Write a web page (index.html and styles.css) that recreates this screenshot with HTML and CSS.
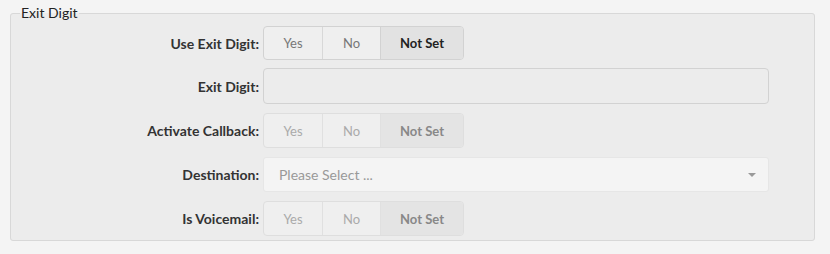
FILE: index.html
```html
<!DOCTYPE html>
<html>
<head>
<meta charset="utf-8">
<link rel="stylesheet" href="styles.css">
</head>
<body>
<fieldset class="box">
  <legend class="box-title">Exit Digit</legend>
  <div class="form">
    <div class="row">
      <label class="lbl">Use Exit Digit:</label>
      <div class="btn-group">
        <span class="btn btn-yes">Yes</span>
        <span class="btn btn-no">No</span>
        <span class="btn btn-notset active">Not Set</span>
      </div>
    </div>
    <div class="row row-input">
      <label class="lbl">Exit Digit:</label>
      <div class="input"></div>
    </div>
    <div class="row">
      <label class="lbl">Activate Callback:</label>
      <div class="btn-group disabled">
        <span class="btn btn-yes">Yes</span>
        <span class="btn btn-no">No</span>
        <span class="btn btn-notset active">Not Set</span>
      </div>
    </div>
    <div class="row">
      <label class="lbl">Destination:</label>
      <div class="select">
        <span class="placeholder">Please Select ...</span>
        <span class="caret"></span>
      </div>
    </div>
    <div class="row">
      <label class="lbl">Is Voicemail:</label>
      <div class="btn-group disabled">
        <span class="btn btn-yes">Yes</span>
        <span class="btn btn-no">No</span>
        <span class="btn btn-notset active">Not Set</span>
      </div>
    </div>
  </div>
</fieldset>
</body>
</html>
```
FILE: styles.css
```css
html, body {
  margin: 0;
  padding: 0;
  background: #f4f4f4;
  font-family: Lato, "Open Sans", sans-serif;
  font-size: 13px;
  color: #333;
}
.box {
  margin: 5px 15px 0 10px;
  width: 805px;
  box-sizing: border-box;
  border: 1px solid #d8d8d8;
  border-radius: 3px;
  background: #ececec;
  padding: 5px 0 4px 9px;
}
.box-title {
  padding: 0 1px;
  font-size: 14px;
  line-height: 16px;
  color: #222;
}
.form {
  display: flex;
  flex-direction: column;
}
.row {
  display: grid;
  grid-template-columns: 239px 506px;
  column-gap: 4px;
  align-items: center;
  height: 35px;
  margin-bottom: 9px;
}
.row:last-child { margin-bottom: 0; }
.row-input { height: 36px; margin-top: 8px; margin-bottom: 9px; }
.row:first-child { height: 34px; margin-bottom: 0; }
.lbl {
  text-align: right;
  font-weight: bold;
  font-size: 14px;
  color: #333;
}
.btn-group {
  display: flex;
  width: 201px;
  height: 100%;
  box-sizing: border-box;
  border: 1px solid #d2d2d2;
  border-radius: 4px;
  overflow: hidden;
  background: #efefef;
}
.btn {
  display: flex;
  align-items: center;
  justify-content: center;
  color: #777;
}
.btn-yes { width: 58px; border-right: 1px solid #d8d8d8; }
.btn-no { width: 57px; border-right: 1px solid #d2d2d2; }
.btn-notset { flex: 1; }
.btn.active {
  background: #e2e2e2;
  font-weight: bold;
  color: #222;
}
.btn-group.disabled { border-color: #dedede; }
.btn-group.disabled .btn { color: #aaa; }
.btn-group.disabled .btn-yes,
.btn-group.disabled .btn-no { border-right-color: #e0e0e0; }
.btn-group.disabled .btn.active { color: #888; background: #e4e4e4; }
.input {
  height: 100%;
  box-sizing: border-box;
  border: 1px solid #d2d2d2;
  border-radius: 4px;
  background: #ececec;
}
.select {
  height: 100%;
  box-sizing: border-box;
  border: 1px solid #e6e6e6;
  border-radius: 3px;
  background: #f4f4f4;
  display: flex;
  align-items: center;
  justify-content: space-between;
  padding: 0 12px 0 15px;
}
.placeholder { color: #999; font-size: 14px; }
.caret {
  width: 0;
  height: 0;
  border-left: 4px solid transparent;
  border-right: 4px solid transparent;
  border-top: 4px solid #999;
}
```
